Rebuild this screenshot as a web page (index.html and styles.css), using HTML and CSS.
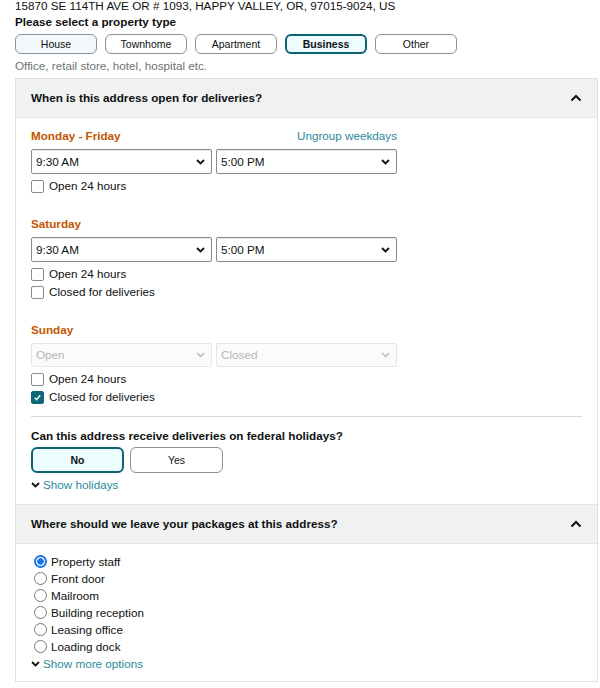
FILE: index.html
```html
<!DOCTYPE html>
<html lang="en">
  <head>
    <meta charset="UTF-8" />
    <meta name="viewport" content="width=device-width, initial-scale=1.0" />
    <title>Delivery preferences</title>
    <link rel="stylesheet" href="styles.css">
  </head>
  <body>
    <div class="page">
      <div class="address">15870 SE 114TH AVE OR # 1093, HAPPY VALLEY, OR, 97015-9024, US</div>
      <div class="label-bold">Please select a property type</div>
      <div class="types">
        <button class="type hover">House</button>
        <button class="type">Townhome</button>
        <button class="type">Apartment</button>
        <button class="type selected">Business</button>
        <button class="type">Other</button>
      </div>
      <div class="hint">Office, retail store, hotel, hospital etc.</div>

      <div class="panel">
        <div class="panel-head">
          <span>When is this address open for deliveries?</span>
          <svg class="chev-up" width="12" height="8" viewBox="0 0 12 8"><path d="M1.5 6.5L6 2l4.5 4.5" fill="none" stroke="#0f1111" stroke-width="2"/></svg>
        </div>
        <div class="panel-body hours">
          <div class="day">
            <div class="day-top">
              <span class="day-name">Monday - Friday</span>
              <a class="link">Ungroup weekdays</a>
            </div>
            <div class="times">
              <div class="select"><span>9:30 AM</span><svg width="9" height="6" viewBox="0 0 9 6"><path d="M1 1l3.5 3.5L8 1" fill="none" stroke="#0f1111" stroke-width="1.8"/></svg></div>
              <div class="select"><span>5:00 PM</span><svg width="9" height="6" viewBox="0 0 9 6"><path d="M1 1l3.5 3.5L8 1" fill="none" stroke="#0f1111" stroke-width="1.8"/></svg></div>
            </div>
            <div class="check"><span class="box"></span>Open 24 hours</div>
          </div>

          <div class="day">
            <div class="day-top"><span class="day-name">Saturday</span></div>
            <div class="times">
              <div class="select"><span>9:30 AM</span><svg width="9" height="6" viewBox="0 0 9 6"><path d="M1 1l3.5 3.5L8 1" fill="none" stroke="#0f1111" stroke-width="1.8"/></svg></div>
              <div class="select"><span>5:00 PM</span><svg width="9" height="6" viewBox="0 0 9 6"><path d="M1 1l3.5 3.5L8 1" fill="none" stroke="#0f1111" stroke-width="1.8"/></svg></div>
            </div>
            <div class="check"><span class="box"></span>Open 24 hours</div>
            <div class="check"><span class="box"></span>Closed for deliveries</div>
          </div>

          <div class="day">
            <div class="day-top"><span class="day-name">Sunday</span></div>
            <div class="times">
              <div class="select disabled"><span>Open</span><svg width="9" height="6" viewBox="0 0 9 6"><path d="M1 1l3.5 3.5L8 1" fill="none" stroke="#b4b7b7" stroke-width="1.4"/></svg></div>
              <div class="select disabled"><span>Closed</span><svg width="9" height="6" viewBox="0 0 9 6"><path d="M1 1l3.5 3.5L8 1" fill="none" stroke="#b4b7b7" stroke-width="1.4"/></svg></div>
            </div>
            <div class="check"><span class="box"></span>Open 24 hours</div>
            <div class="check"><span class="box checked"><svg width="9" height="9" viewBox="0 0 9 9"><path d="M1.8 4.8l1.8 1.8L7.2 2.2" fill="none" stroke="#fff" stroke-width="1.4"/></svg></span>Closed for deliveries</div>
          </div>

          <hr class="divider">

          <div class="question">Can this address receive deliveries on federal holidays?</div>
          <div class="yesno">
            <button class="choice selected">No</button>
            <button class="choice">Yes</button>
          </div>
          <div class="expander">
            <svg width="9" height="6" viewBox="0 0 9 6"><path d="M1 1l3.5 3.5L8 1" fill="none" stroke="#0f1111" stroke-width="1.8"/></svg>
            <a class="link">Show holidays</a>
          </div>
        </div>

        <div class="panel-head second">
          <span>Where should we leave your packages at this address?</span>
          <svg class="chev-up" width="12" height="8" viewBox="0 0 12 8"><path d="M1.5 6.5L6 2l4.5 4.5" fill="none" stroke="#0f1111" stroke-width="2"/></svg>
        </div>
        <div class="panel-body places">
          <div class="radio"><span class="dot on"></span>Property staff</div>
          <div class="radio"><span class="dot"></span>Front door</div>
          <div class="radio"><span class="dot"></span>Mailroom</div>
          <div class="radio"><span class="dot"></span>Building reception</div>
          <div class="radio"><span class="dot"></span>Leasing office</div>
          <div class="radio"><span class="dot"></span>Loading dock</div>
          <div class="expander more">
            <svg width="9" height="6" viewBox="0 0 9 6"><path d="M1 1l3.5 3.5L8 1" fill="none" stroke="#0f1111" stroke-width="1.8"/></svg>
            <a class="link">Show more options</a>
          </div>
        </div>
      </div>
    </div>
  </body>
</html>
```

FILE: styles.css
```css
* {
  box-sizing: border-box;
  margin: 0px;
  padding: 0px;
}
body {
  background: #fff;
  color: #0f1111;
  font-family: "Liberation Sans", Arial, sans-serif;
  font-size: 11.7px;
  line-height: 14px;
}
.page {
  width: 583px;
  margin-left: 15px;
}
.address {
  line-height: 12px;
}
.label-bold {
  margin-top: 3px;
  font-weight: bold;
}
.types {
  display: flex;
  gap: 8px;
  margin-top: 5px;
}
.type {
  width: 82px;
  height: 20px;
  border: 1px solid #8d9096;
  border-radius: 6px;
  background: #fff;
  font: inherit;
  font-size: 10.5px;
  color: #0f1111;
}
.type.hover {
  background: #f3f8fa;
}
.type.selected {
  border: 2px solid #0e6372;
  background: #edfdff;
  font-weight: bold;
}
.hint {
  margin-top: 5px;
  color: #6f7373;
}
.panel {
  margin-top: 5px;
  border: 1px solid #dfe1e1;
}
.panel-head {
  height: 39px;
  padding: 0 15px;
  display: flex;
  align-items: center;
  justify-content: space-between;
  background: #f0f2f2;
  border-bottom: 1px solid #e3e6e6;
  font-weight: bold;
}
.panel-head.second {
  height: 40px;
  border-top: 1px solid #e3e6e6;
}
.panel-body {
  padding: 11px 15px;
}
.hours {
  padding-bottom: 12px;
}
.day + .day {
  margin-top: 22px;
}
.day-top {
  width: 366px;
  display: flex;
  justify-content: space-between;
}
.day-name {
  color: #c45500;
  font-weight: bold;
}
.link {
  color: #2a8a9c;
}
.times {
  display: flex;
  gap: 4px;
  margin: 6px 0 3px;
}
.select {
  width: 181px;
  height: 25px;
  border: 1px solid #888c8c;
  border-radius: 2px;
  padding: 0 6px 0 4px;
  display: flex;
  align-items: center;
  justify-content: space-between;
  box-shadow: 0 1px 1px rgba(15, 17, 17, 0.1) inset;
}
.select.disabled {
  height: 24px;
  color: #b4b7b7;
  border-color: #e3e6e6;
  background: #fbfbfb;
  box-shadow: none;
}
.check {
  height: 18px;
  display: flex;
  align-items: center;
}
.box {
  width: 13px;
  height: 13px;
  margin-right: 5px;
  border: 1px solid #888c8c;
  border-radius: 2px;
  display: flex;
  align-items: center;
  justify-content: center;
}
.box.checked {
  background: #0e6a7a;
  border-color: #0e6a7a;
}
.divider {
  margin-top: 10px;
  border: none;
  border-top: 1px solid #d5d9d9;
}
.question {
  margin-top: 12px;
  font-weight: bold;
}
.yesno {
  display: flex;
  gap: 6px;
  margin-top: 4px;
}
.choice {
  width: 93px;
  height: 26px;
  border: 1px solid #8d9096;
  border-radius: 6px;
  background: #fff;
  font: inherit;
  font-size: 10.5px;
  color: #0f1111;
}
.choice.selected {
  border: 2.5px solid #0e6372;
  background: #edfdff;
  font-weight: bold;
}
.expander {
  margin-top: 5px;
  display: flex;
  align-items: center;
  gap: 3px;
}
.places {
  padding: 9px 15px 10px 18px;
}
.radio {
  height: 17px;
  display: flex;
  align-items: center;
}
.dot {
  width: 13px;
  height: 13px;
  margin-right: 4px;
  border: 1px solid #767676;
  border-radius: 50%;
}
.dot.on {
  border: 2px solid #1a73e8;
  background: radial-gradient(circle, #1a73e8 0 3px, #fff 3.5px);
}
.expander.more {
  margin-top: 2px;
  margin-left: -3px;
}
```
